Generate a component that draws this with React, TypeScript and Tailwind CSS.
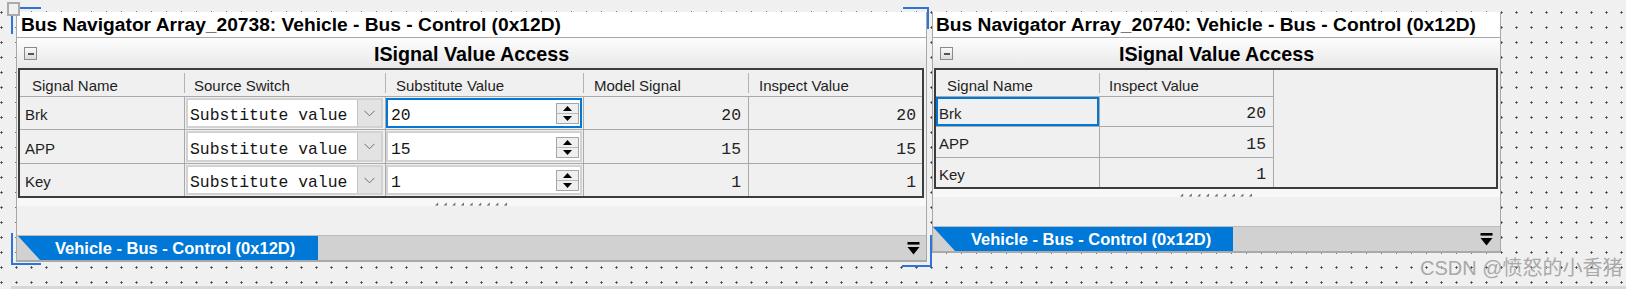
import React from "react";

const SANS = "font-['Liberation_Sans',Arial,sans-serif]";
const MONO = "font-['Liberation_Mono','Courier_New',monospace]";

function MinusBox() {
  return (
    <div className="w-[13px] h-[13px] border border-[#8a8a8a] bg-gradient-to-b from-[#fafafa] to-[#dadada] flex items-center justify-center">
      <div className="w-[6px] h-[2px] bg-[#555555]" />
    </div>
  );
}

function Grip() {
  return (
    <svg width="80" height="4" viewBox="0 0 80 4">
      {Array.from({ length: 9 }).map((_, i) => {
        const x = i * 8.6;
        return <polygon key={i} points={`${x + 3.2},0.4 ${x + 3.2},3.6 ${x},3.6`} fill="#6a6a6a" />;
      })}
    </svg>
  );
}

function BarIcon() {
  return (
    <svg width="13" height="13" viewBox="0 0 13 13">
      <rect x="0.5" y="0" width="12" height="2.6" fill="#000" />
      <polygon points="0.5,5 12.5,5 6.5,12.5" fill="#000" />
    </svg>
  );
}

function Chevron() {
  return (
    <svg width="11" height="7" viewBox="0 0 11 7">
      <polyline points="0.5,0.8 5.5,5.8 10.5,0.8" fill="none" stroke="#6e6e6e" strokeWidth="1" />
    </svg>
  );
}

function Spinner() {
  return (
    <div className="w-[23px] h-[21px] border border-[#a6a6a6] bg-[#efefef] flex flex-col">
      <div className="flex-1 flex items-center justify-center border-b border-[#b8b8b8]">
        <svg width="9" height="5" viewBox="0 0 9 5">
          <polygon points="0,5 9,5 4.5,0" fill="#000" />
        </svg>
      </div>
      <div className="flex-1 flex items-center justify-center">
        <svg width="9" height="5" viewBox="0 0 9 5">
          <polygon points="0,0 9,0 4.5,5" fill="#000" />
        </svg>
      </div>
    </div>
  );
}

function TitleBar({ text, pl }: { text: string; pl: string }) {
  return (
    <div
      className={`h-[26px] bg-white border-b border-[#a8a8a8] flex items-center ${pl} text-[19.2px] leading-[19px] font-bold text-black whitespace-nowrap`}
    >
      {text}
    </div>
  );
}

function SectionHeader() {
  return (
    <div className="h-[30px] bg-gradient-to-b from-[#fdfdfd] to-[#e8e8e8] grid grid-cols-[40px_1fr_40px] items-start">
      <div className="pt-[9px] pl-[7px]">
        <MinusBox />
      </div>
      <div className="pt-[6px] text-center text-[19.7px] leading-[20px] font-bold text-black whitespace-nowrap">
        ISignal Value Access
      </div>
      <div />
    </div>
  );
}

function HeadCell({ label, pl, sep }: { label: string; pl: string; sep: boolean }) {
  return (
    <div className="flex items-center h-full">
      <span className={`${pl} pt-[4px] text-[15px] leading-[17px] text-[#1e1e1e] whitespace-nowrap`}>{label}</span>
      {sep && <div className="ml-auto w-px h-[20px] bg-[#b4b4b4]" />}
    </div>
  );
}

function Strip() {
  return (
    <div className="h-[8px] bg-[#f8f8f8] flex justify-center items-end pl-[6px]">
      <Grip />
    </div>
  );
}

function TabBar({ tabMl, pl, iconMr }: { tabMl: string; pl: string; iconMr: string }) {
  return (
    <div className="h-[27px] border-t border-[#bcbcbc] border-b-2 border-b-[#a9a9a9] bg-[#d1d1d1] flex items-stretch">
      <div
        className={`${tabMl} w-[300px] bg-[#0078d7] [clip-path:polygon(0_0,100%_0,100%_100%,22px_100%)] flex items-center ${pl} text-white font-bold text-[16.5px] leading-[19px] whitespace-nowrap`}
      >
        Vehicle - Bus - Control (0x12D)
      </div>
      <div className={`ml-auto ${iconMr} flex items-center`}>
        <BarIcon />
      </div>
    </div>
  );
}

const rows = [
  { name: "Brk", v: "20" },
  { name: "APP", v: "15" },
  { name: "Key", v: "1" },
];

function Panel1() {
  const heights = ["h-[33px]", "h-[34px]", "h-[32px]"];
  return (
    <div className="w-[911px] border-x border-[#a8a8a8] bg-[#f0f0f0] flex flex-col">
      <TitleBar text="Bus Navigator Array_20738: Vehicle - Bus - Control (0x12D)" pl="pl-[4px]" />
      <SectionHeader />
      <div className="ml-[1px] mr-[2px] border-2 border-[#3c3c3c]">
        <div className="h-[27px] border-b border-[#a9a9a9] grid grid-cols-[165px_201px_198px_165px_173px]">
          <HeadCell label="Signal Name" pl="pl-[12px]" sep />
          <HeadCell label="Source Switch" pl="pl-[9px]" sep />
          <HeadCell label="Substitute Value" pl="pl-[10px]" sep />
          <HeadCell label="Model Signal" pl="pl-[10px]" sep />
          <HeadCell label="Inspect Value" pl="pl-[10px]" sep={false} />
        </div>
        {rows.map((r, i) => (
          <div
            key={r.name}
            className={`${heights[i]} ${i < 2 ? "border-b border-[#a9a9a9]" : ""} grid grid-cols-[165px_201px_198px_165px_173px]`}
          >
            <div className="border-r border-[#a9a9a9] flex items-center pl-[5px] pt-[3px] text-[15px] leading-[17px] text-[#1e1e1e]">
              {r.name}
            </div>
            <div className="border-r border-[#a9a9a9] py-[1px] pl-[1px] pr-[2px]">
              <div className="h-full border-2 border-[#d2d2d2] flex">
                <div
                  className={`flex-1 bg-white flex items-center pl-[2px] pt-[5px] ${MONO} text-[16.4px] leading-[19px] text-[#151515] whitespace-nowrap`}
                >
                  Substitute value
                </div>
                <div className="w-[24px] bg-[#e3e3e3] border-l border-[#c4c4c4] flex items-center justify-center">
                  <Chevron />
                </div>
              </div>
            </div>
            <div className="border-r border-[#a9a9a9] py-[1px] pr-[1px]">
              <div className={`h-full border-2 ${i === 0 ? "border-[#0078d7]" : "border-[#d2d2d2]"} bg-white flex items-center`}>
                <div className={`flex-1 pl-[3px] pt-[5px] ${MONO} text-[16.4px] leading-[19px] text-[#151515]`}>{r.v}</div>
                <div className="mr-[1px] pt-[1px]">
                  <Spinner />
                </div>
              </div>
            </div>
            <div className={`border-r border-[#a9a9a9] flex items-center justify-end pr-[7px] pt-[5px] ${MONO} text-[16.4px] leading-[19px] text-[#222]`}>
              {r.v}
            </div>
            <div className={`flex items-center justify-end pr-[6px] pt-[5px] ${MONO} text-[16.4px] leading-[19px] text-[#222]`}>
              {r.v}
            </div>
          </div>
        ))}
      </div>
      <Strip />
      <div className="h-[29px]" />
      <TabBar tabMl="ml-[1px]" pl="pl-[37px]" iconMr="mr-[6px]" />
    </div>
  );
}

function Panel2() {
  const heights = ["h-[30px]", "h-[31px]", "h-[29px]"];
  return (
    <div className="w-[569px] border-x border-[#a8a8a8] bg-[#f0f0f0] flex flex-col">
      <TitleBar text="Bus Navigator Array_20740: Vehicle - Bus - Control (0x12D)" pl="pl-[3px]" />
      <SectionHeader />
      <div className="ml-[1px] mr-[2px] border-2 border-[#3c3c3c] flex">
        <div className="w-[338px] border-r border-[#a9a9a9]">
          <div className="h-[27px] border-b border-[#a9a9a9] grid grid-cols-[164px_173px]">
            <HeadCell label="Signal Name" pl="pl-[11px]" sep />
            <HeadCell label="Inspect Value" pl="pl-[9px]" sep={false} />
          </div>
          {rows.map((r, i) => (
            <div
              key={r.name}
              className={`${heights[i]} ${i < 2 ? "border-b border-[#a9a9a9]" : ""} grid grid-cols-[164px_173px]`}
            >
              <div className="border-r border-[#a9a9a9]">
                <div
                  className={`h-full ${i === 0 ? "border-2 border-[#0078d7] pl-[1px]" : "pl-[3px]"} flex items-center pt-[3px] text-[15px] leading-[17px] text-[#1e1e1e]`}
                >
                  {r.name}
                </div>
              </div>
              <div className={`flex items-center justify-end pr-[7px] pt-[4px] ${MONO} text-[16.4px] leading-[19px] text-[#222]`}>
                {r.v}
              </div>
            </div>
          ))}
        </div>
        <div className="flex-1" />
      </div>
      <Strip />
      <div className="h-[29px]" />
      <TabBar tabMl="ml-0" pl="pl-[38px]" iconMr="mr-[7px]" />
    </div>
  );
}

export default function App() {
  return (
    <div className={`relative w-[1626px] h-[289px] overflow-hidden bg-[#f0f0f0] ${SANS}`}>
      <div className="flex flex-col h-full">
        <div className="flex-1 bg-[radial-gradient(circle,#3a3a3a_0.9px,transparent_1.2px)] bg-size-[15px_15px] bg-position-[-6px_5px] pt-[12px] pl-[16px] flex items-start gap-[5px]">
          <Panel1 />
          <Panel2 />
        </div>
        <div className="h-[3px] ml-[11px] bg-[#d8d8d8]" />
      </div>

      {/* selection adornments */}
      <div className="absolute left-[19px] top-[7px] w-[22px] h-[2px] bg-[#2f74d6]" />
      <div className="absolute left-[11px] top-[16px] w-[2px] h-[18px] bg-[#2f74d6]" />
      <div className="absolute left-[7px] top-[2px] w-[13px] h-[14px] border-2 border-[#ababab] bg-[#f0f0f0]" />
      <div className="absolute left-[903px] top-[7px] w-[26px] h-[2px] bg-[#2f74d6]" />
      <div className="absolute left-[927px] top-[7px] w-[2px] h-[22px] bg-[#2f74d6]" />
      <div className="absolute left-[11px] top-[233px] w-[2px] h-[32px] bg-[#2f74d6]" />
      <div className="absolute left-[11px] top-[263px] w-[30px] h-[2px] bg-[#2f74d6]" />
      <div className="absolute left-[902px] top-[265px] w-[30px] h-[2px] bg-[#2f74d6]" />
      <div className="absolute left-[930px] top-[235px] w-[2px] h-[32px] bg-[#2f74d6]" />

      <div className="absolute left-[1420px] top-[256px] text-[20px] leading-[24px] text-[#a9a9a9] whitespace-nowrap font-['Liberation_Sans','Noto_Sans_CJK_SC',sans-serif]">
        CSDN @愤怒的小香猪
      </div>
    </div>
  );
}
